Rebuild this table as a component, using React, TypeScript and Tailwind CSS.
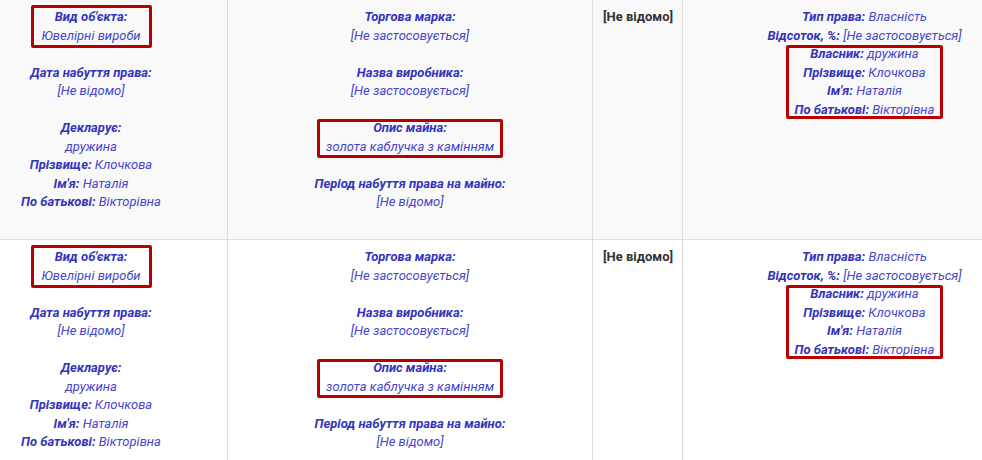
import React from "react";

type Line = { label?: string; value?: string } | null;

function Text({ line }: { line: Line }) {
    if (!line) return <div className="h-[18.5px]" />;
    return (
        <div className="h-[18.5px] leading-[18.5px] whitespace-nowrap">
            {line.label && <b className="font-bold text-[#3434bb]">{line.label}</b>}
            {line.label && line.value ? " " : null}
            {line.value && <span className="text-[#4646cc]">{line.value}</span>}
        </div>
    );
}

function Boxed({ lines, frame }: { lines: Line[]; frame: string }) {
    return (
        <div className="relative inline-block">
            <div className={`absolute border-[3px] border-[#b80000] rounded-[2px] ${frame}`} />
            {lines.map((l, i) => (
                <Text key={i} line={l} />
            ))}
        </div>
    );
}

function Row({ bg }: { bg: string }) {
    return (
        <div className={`grid grid-cols-[273px_365px_90px_363px] h-[240px] border-b border-[#dddddd] ${bg}`}>
            {/* Об'єкт */}
            <div className="border-r border-[#dddddd] pt-[8px] text-center italic">
                <Boxed
                    frame="-left-[10px] -right-[11px] -top-[3px] -bottom-[3px]"
                    lines={[{ label: "Вид об'єкта:" }, { value: "Ювелірні вироби" }]}
                />
                <Text line={null} />
                <Text line={{ label: "Дата набуття права:" }} />
                <Text line={{ value: "[Не відомо]" }} />
                <Text line={null} />
                <Text line={{ label: "Декларує:" }} />
                <Text line={{ value: "дружина" }} />
                <Text line={{ label: "Прізвище:", value: "Клочкова" }} />
                <Text line={{ label: "Ім'я:", value: "Наталія" }} />
                <Text line={{ label: "По батькові:", value: "Вікторівна" }} />
            </div>

            {/* Опис */}
            <div className="border-r border-[#dddddd] pt-[8px] text-center italic">
                <Text line={{ label: "Торгова марка:" }} />
                <Text line={{ value: "[Не застосовується]" }} />
                <Text line={null} />
                <Text line={{ label: "Назва виробника:" }} />
                <Text line={{ value: "[Не застосовується]" }} />
                <Text line={null} />
                <Boxed
                    frame="-left-[9px] -right-[9px] top-0 -bottom-[2px]"
                    lines={[{ label: "Опис майна:" }, { value: "золота каблучка з камінням" }]}
                />
                <Text line={null} />
                <Text line={{ label: "Період набуття права на майно:" }} />
                <Text line={{ value: "[Не відомо]" }} />
            </div>

            {/* Вартість */}
            <div className="border-r border-[#dddddd] pt-[8px] pl-[10px]">
                <div className="h-[18.5px] leading-[18.5px] font-bold text-[#333333]">[Не відомо]</div>
            </div>

            {/* Права */}
            <div className="pt-[8px] text-center italic">
                <Text line={{ label: "Тип права:", value: "Власність" }} />
                <Text line={{ label: "Відсоток, %:", value: "[Не застосовується]" }} />
                <Boxed
                    frame="-left-[9px] -right-[9px] top-0 bottom-0"
                    lines={[
                        { label: "Власник:", value: "дружина" },
                        { label: "Прізвище:", value: "Клочкова" },
                        { label: "Ім'я:", value: "Наталія" },
                        { label: "По батькові:", value: "Вікторівна" },
                    ]}
                />
            </div>
        </div>
    );
}

export default function App() {
    return (
        <div className="w-[982px] h-[460px] overflow-hidden bg-white font-['Roboto',_'Liberation_Sans',_sans-serif] text-[13px]">
            <div className="w-[1091px] -ml-[45px]">
                <Row bg="bg-[#f9f9f9]" />
                <Row bg="bg-white" />
            </div>
        </div>
    );
}
